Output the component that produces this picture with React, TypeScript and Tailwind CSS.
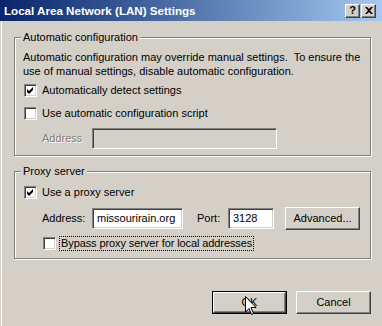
import React from 'react';

const raised =
    'border border-t-white border-l-white border-r-[#404040] border-b-[#404040] shadow-[inset_-1px_-1px_0_#808080]';
const sunken =
    'border border-t-[#808080] border-l-[#808080] border-r-white border-b-white shadow-[inset_1px_1px_0_#404040,inset_-1px_-1px_0_#d4d0c8]';

const Check = ({ checked }: { checked?: boolean }) => (
    <div className={`w-[13px] h-[13px] bg-white flex items-center justify-center shrink-0 ${sunken}`}>
        {checked && (
            <svg width="7" height="7" viewBox="0 0 7 7">
                <path d="M0 2 L2 4 L6 0 L6 3 L2 7 L0 5 Z" fill="#000" />
            </svg>
        )}
    </div>
);

const Group = ({ label, className, children }: { label: string; className: string; children: React.ReactNode }) => (
    <div className={`relative w-[357px] border border-[#808080] shadow-[inset_1px_1px_0_#fff,1px_1px_0_#fff] ${className}`}>
        <span className="absolute -top-[8px] left-[6px] px-[2px] bg-[#d4d0c8] leading-[14px]">{label}</span>
        {children}
    </div>
);

export default function App() {
    return (
        <div className="relative w-[382px] h-[326px] overflow-hidden bg-[#d4d0c8] text-[11px] text-black font-['Liberation_Sans',sans-serif] shadow-[inset_1px_0_0_#d4d0c8,inset_2px_0_0_#fff]">
            <div className="h-[21px] flex items-center justify-between pl-[4px] pr-[6px] bg-gradient-to-r from-[#0a246a] to-[#a6caf0]">
                <span className="text-white font-bold text-[11.6px] leading-[14px]">Local Area Network (LAN) Settings</span>
                <div className="flex gap-[1px]">
                    <div className={`w-[15px] h-[14px] bg-[#d4d0c8] flex items-center justify-center font-bold text-[11px] leading-none ${raised}`}>
                        ?
                    </div>
                    <div className={`w-[15px] h-[14px] bg-[#d4d0c8] flex items-center justify-center ${raised}`}>
                        <svg width="8" height="7" viewBox="0 0 8 7">
                            <path d="M0 0 L2 0 L4 2 L6 0 L8 0 L5 3.5 L8 7 L6 7 L4 5 L2 7 L0 7 L3 3.5 Z" fill="#000" />
                        </svg>
                    </div>
                </div>
            </div>

            <div className="pl-[14px] pt-[16px] flex flex-col">
                <Group label="Automatic configuration" className="h-[119px] pl-[8px] pt-[12px]">
                    <p className="leading-[14px]">
                        Automatic configuration may override manual settings.&nbsp; To ensure the
                        <br />
                        use of manual settings, disable automatic configuration.
                    </p>
                    <div className="flex items-center gap-[5px] mt-[6px] ml-[1px] h-[13px]">
                        <Check checked />
                        <span>Automatically detect settings</span>
                    </div>
                    <div className="flex items-center gap-[5px] mt-[10px] ml-[1px] h-[13px]">
                        <Check />
                        <span>Use automatic configuration script</span>
                    </div>
                    <div className="flex items-center mt-[8px] ml-[19px] h-[21px]">
                        <span className="w-[50px] text-[#808080] [text-shadow:1px_1px_0_#fff]">Address</span>
                        <div className={`w-[185px] h-[21px] bg-[#d4d0c8] ${sunken}`} />
                    </div>
                </Group>

                <Group label="Proxy server" className="h-[88px] mt-[15px] pl-[8px] pt-[14px]">
                    <div className="flex items-center gap-[5px] ml-[1px] h-[13px]">
                        <Check checked />
                        <span>Use a proxy server</span>
                    </div>
                    <div className="flex items-center mt-[8px] ml-[19px] h-[23px]">
                        <span className="w-[50px]">Address:</span>
                        <div className={`w-[91px] h-[21px] bg-white pl-[4px] flex items-center ${sunken}`}>missourirain.org</div>
                        <span className="ml-[14px] w-[31px]">Port:</span>
                        <div className={`w-[46px] h-[21px] bg-white pl-[4px] flex items-center ${sunken}`}>3128</div>
                        <div className={`ml-[11px] w-[75px] h-[23px] flex items-center justify-center ${raised}`}>Advanced...</div>
                    </div>
                    <div className="flex items-center mt-[6px] ml-[20px] h-[15px]">
                        <Check />
                        <span className="ml-[3px] px-[1px] border border-dotted border-black leading-[13px] tracking-[-0.1px]">
                            Bypass proxy server for local addresses
                        </span>
                    </div>
                </Group>

                <div className="flex justify-end gap-[9px] mt-[32px] pr-[11px]">
                    <div className="relative w-[75px] h-[23px] border border-black">
                        <div className={`w-full h-full flex items-center justify-center ${raised}`}>OK</div>
                        <svg className="absolute left-[32px] top-[4px]" width="12" height="20" viewBox="0 0 12 20">
                            <path d="M0.5 0.5 L0.5 16 L4 12.5 L6.5 18.5 L8.5 17.5 L6 11.5 L11 11.5 Z" fill="#fff" stroke="#000" />
                        </svg>
                    </div>
                    <div className={`w-[75px] h-[23px] flex items-center justify-center ${raised}`}>Cancel</div>
                </div>
            </div>
        </div>
    );
}
